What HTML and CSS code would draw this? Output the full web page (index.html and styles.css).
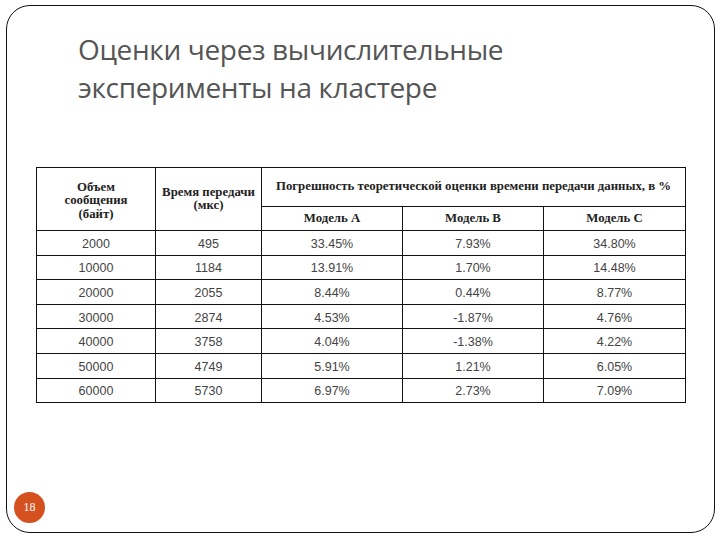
FILE: index.html
```html
<!DOCTYPE html>
<html lang="ru">
<head>
<meta charset="utf-8">
<link rel="stylesheet" href="styles.css">
</head>
<body>
<div class="slide">
  <h1 class="title">Оценки через вычислительные<br>эксперименты на кластере</h1>
  <table class="data">
    <colgroup>
      <col class="c1"><col class="c2"><col class="c3"><col class="c4"><col class="c5">
    </colgroup>
    <thead>
      <tr class="h1">
        <th rowspan="2" class="first">Объем<br>сообщения<br>(байт)</th>
        <th rowspan="2">Время передачи<br>(мкс)</th>
        <th colspan="3">Погрешность теоретической оценки времени передачи данных, в %</th>
      </tr>
      <tr class="h2">
        <th>Модель A</th><th>Модель B</th><th>Модель C</th>
      </tr>
    </thead>
    <tbody>
      <tr><td>2000</td><td>495</td><td>33.45%</td><td>7.93%</td><td>34.80%</td></tr>
      <tr><td>10000</td><td>1184</td><td>13.91%</td><td>1.70%</td><td>14.48%</td></tr>
      <tr><td>20000</td><td>2055</td><td>8.44%</td><td>0.44%</td><td>8.77%</td></tr>
      <tr><td>30000</td><td>2874</td><td>4.53%</td><td>-1.87%</td><td>4.76%</td></tr>
      <tr><td>40000</td><td>3758</td><td>4.04%</td><td>-1.38%</td><td>4.22%</td></tr>
      <tr><td>50000</td><td>4749</td><td>5.91%</td><td>1.21%</td><td>6.05%</td></tr>
      <tr><td>60000</td><td>5730</td><td>6.97%</td><td>2.73%</td><td>7.09%</td></tr>
    </tbody>
  </table>
  <div class="num">18</div>
</div>
</body>
</html>
```
FILE: styles.css
```css
html, body { margin: 0; padding: 0; background: #fff; }
.slide {
  position: relative;
  box-sizing: border-box;
  margin: 5px 0 0 6px;
  width: 709px;
  height: 528px;
  border: 1.5px solid #111;
  border-radius: 24px;
  padding: 24px 0 0 29px;
}
.title {
  margin: 0 0 0 42px;
  font-family: "Open Sans", sans-serif;
  font-weight: 400;
  font-size: 28px;
  line-height: 38px;
  color: #555;
  letter-spacing: -0.35px;
}
.data {
  margin-top: 61px;
  border-collapse: collapse;
  table-layout: fixed;
  width: 649px;
}
.c1 { width: 119px; }
.c2 { width: 106px; }
.c3 { width: 141px; }
.c4 { width: 141px; }
.c5 { width: 142px; }
.data th, .data td {
  border: 1px solid #111;
  text-align: center;
  padding: 0;
}
.data th {
  font-family: "Liberation Serif", serif;
  font-weight: bold;
  font-size: 12.8px;
  line-height: 13.5px;
  color: #222;
}
.data th.first { padding-top: 4px; }
.h1 th { height: 38px; }
.h2 th { height: 22px; padding-top: 1px; }
.data td {
  font-family: "Liberation Sans", sans-serif;
  font-size: 12.5px;
  color: #444;
  height: 21.6px;
  padding-top: 2px;
}
.num {
  position: absolute;
  left: 7px;
  bottom: 9px;
  width: 31px;
  height: 31px;
  border-radius: 50%;
  background: #d4501e;
  color: #fff;
  font-family: "Liberation Serif", serif;
  font-size: 12px;
  line-height: 31px;
  text-align: center;
}
```
